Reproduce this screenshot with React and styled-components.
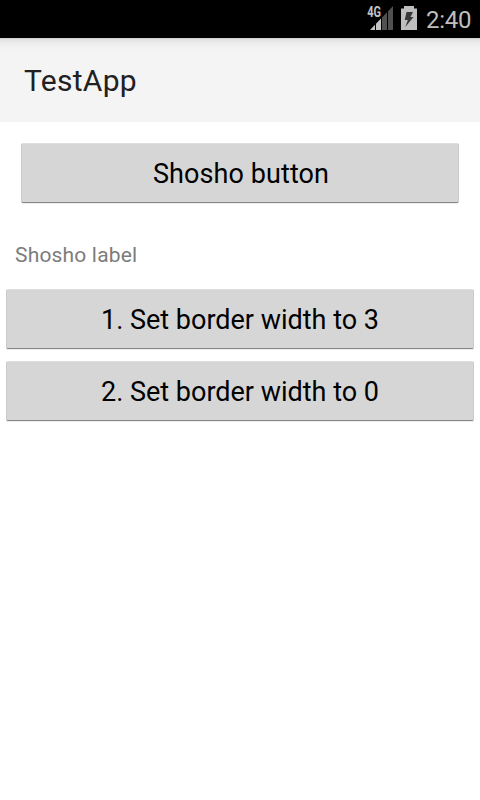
import React from "react";
import styled, { createGlobalStyle } from "styled-components";

const GlobalStyle = createGlobalStyle`
  * { box-sizing: border-box; }
  body { margin: 0; background: #fff; font-family: Roboto, sans-serif; }
`;

const Screen = styled.main`
  display: flex;
  flex-direction: column;
  height: 800px;
  width: 480px;
  overflow: hidden;
  background: #fff;
`;

const StatusBar = styled.div`
  display: flex;
  justify-content: flex-end;
  height: 38px;
  padding-right: 9px;
  background: #000;
`;

const StatusIcons = styled.svg`
  display: block;
  width: 54px;
  height: 38px;
`;

const Clock = styled.time`
  width: 51px;
  padding-left: 6px;
  color: #bebebe;
  font-size: 24px;
  letter-spacing: -0.3px;
  line-height: 40px;
  white-space: nowrap;
`;

const ActionBar = styled.header`
  height: 84px;
  padding-left: 24px;
  background: linear-gradient(#c8c8c8 0, #dfdfdf 1px, #e6e6e6 3px, #eee 6px, #f2f2f2 9px, #f4f4f4 14px);
`;

const Title = styled.h1`
  margin: 0;
  color: #212121;
  font-size: 30px;
  font-weight: 400;
  letter-spacing: 0.28px;
  line-height: 85px;
`;

const Button = styled.button`
  display: block;
  height: 60px;
  margin: ${(p) => p.$margin};
  padding: 0 0 0 ${(p) => p.$inset || "0"};
  border: 1px solid #cbcbcb;
  border-top-color: #dedede;
  border-bottom-color: #858585;
  border-radius: 2px;
  background: #d6d6d6;
  color: #000;
  font: 400 27px/60px Roboto, sans-serif;
  letter-spacing: ${(p) => p.$tracking || "normal"};
  box-shadow: 0 1px 0 #eee;
`;

const Label = styled.p`
  margin: 40px 15px 21px;
  color: #7c7c7c;
  font-size: 21px;
  letter-spacing: 0.18px;
  line-height: 25px;
`;

const NetworkType = styled.text`
  fill: #c4c4c4;
  font: 700 11px Roboto, sans-serif;
`;

export default function App() {
  return (
    <Screen>
      <GlobalStyle />
      <StatusBar>
        <StatusIcons viewBox="366 0 54 38">
          <path d="M370 30L375 24.8V30ZM376 23.8L381 18.6V30H376Z" fill="#c4c4c4" />
          <path d="M382 17.5L387 12.3V30H382ZM388 11.2L393 6V30H388Z" fill="#505050" />
          <NetworkType transform="translate(367.3 17.4) scale(1 1.27)">4G</NetworkType>
          <path d="M404 6H414V8.5H417V30H401V8.5H404Z" fill="#bebebe" />
          <path d="M406.5 12H413L410.5 17H413.5L405.3 27L407.8 20H404.7Z" fill="#383838" />
        </StatusIcons>
        <Clock>2:40</Clock>
      </StatusBar>
      <ActionBar>
        <Title>TestApp</Title>
      </ActionBar>
      <Button $margin="21px 21px 0" $tracking="0.08px" $inset="2px">Shosho button</Button>
      <Label>Shosho label</Label>
      <Button $margin="0 6px">1. Set border width to 3</Button>
      <Button $margin="12px 6px 0">2. Set border width to 0</Button>
    </Screen>
  );
}
